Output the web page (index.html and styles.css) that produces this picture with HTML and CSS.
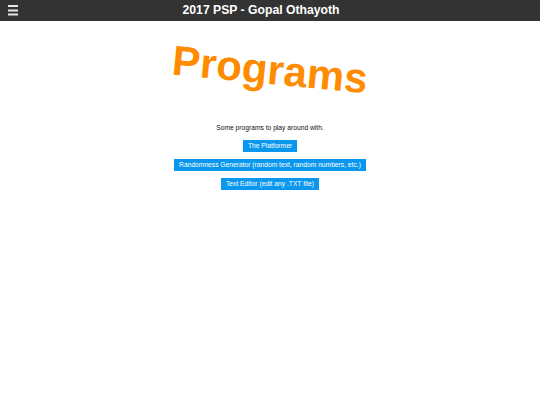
FILE: index.html
```html
<!DOCTYPE html>
<html>
<head>
<meta charset="utf-8">
<link rel="stylesheet" href="styles.css">
</head>
<body>
<header class="topbar">
  <svg class="menu" width="10" height="12" viewBox="0 0 10 12"><rect x="0" y="0" width="10" height="2" fill="#e8e8e8"/><rect x="0" y="4.5" width="10" height="2" fill="#e8e8e8"/><rect x="0" y="8.5" width="10" height="2" fill="#e8e8e8"/></svg>
  <div class="title">2017 PSP - Gopal Othayoth</div>
</header>
<main class="content">
  <h1 class="heading">Programs</h1>
  <p class="intro">Some programs to play around with.</p>
  <div class="buttons">
    <button class="btn">The Platformer</button>
    <button class="btn">Randomness Generator (random text, random numbers, etc.)</button>
    <button class="btn">Text Editor (edit any .TXT file)</button>
  </div>
</main>
</body>
</html>
```
FILE: styles.css
```css
html, body {
  margin: 0;
  padding: 0;
  background: #ffffff;
  font-family: "Liberation Sans", Arial, sans-serif;
}
.topbar {
  position: relative;
  height: 21px;
  padding-right: 18px;
  background: #333333;
  display: flex;
  align-items: center;
  justify-content: center;
}
.menu {
  position: absolute;
  left: 8px;
  top: 5px;
}
.title {
  color: #ffffff;
  font-weight: bold;
  font-size: 12.2px;
  line-height: 15px;
}
.content {
  display: flex;
  flex-direction: column;
  align-items: center;
}
.heading {
  margin: 25px 0 0;
  font-size: 42px;
  line-height: 47px;
  font-weight: bold;
  color: #ff8c00;
  transform: rotate(5.5deg);
}
.intro {
  margin: 31px 0 0;
  font-size: 6.7px;
  line-height: 8px;
  color: #111111;
}
.buttons {
  margin-top: 8px;
  display: flex;
  flex-direction: column;
  align-items: center;
  gap: 7px;
}
.btn {
  border: none;
  background: #0a97ee;
  color: #ffffff;
  font-family: "Liberation Sans", Arial, sans-serif;
  font-size: 6.7px;
  line-height: 8px;
  padding: 2px 5px;
  margin: 0;
  border-radius: 0;
}
```
